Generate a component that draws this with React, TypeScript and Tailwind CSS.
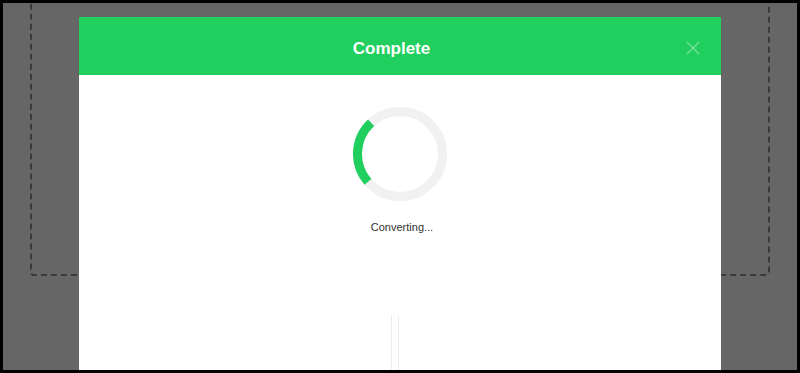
import React from 'react';

function Spinner() {
  const r = 42.5;
  const c = 2 * Math.PI * r;
  const arc = c * (88 / 360);
  return (
    <svg width="94" height="94" viewBox="0 0 94 94">
      <circle cx="47" cy="47" r={r} fill="none" stroke="#f1f1f1" strokeWidth="9" />
      <circle
        cx="47"
        cy="47"
        r={r}
        fill="none"
        stroke="#20cf5e"
        strokeWidth="9"
        strokeDasharray={`${arc} ${c}`}
        transform="rotate(139 47 47)"
      />
    </svg>
  );
}

export default function App() {
  return (
    <div className="h-[373px] w-[800px] bg-black p-[3px] font-['Liberation_Sans',Arial,sans-serif]">
      <div className="relative h-full w-full overflow-hidden bg-[#666666]">
        {/* drop zone behind the dialog */}
        <div className="mx-[27px] -mt-[13px] h-[286px] rounded-[4px] border-2 border-dashed border-[#3a3a3a]" />

        {/* dialog */}
        <div className="absolute left-[76px] top-[14px] flex h-[420px] w-[642px] flex-col bg-white">
          <div className="relative flex h-[58px] shrink-0 items-center justify-center bg-[#20cf5e] pr-[17px] pt-[5px]">
            <h2 className="text-[17px] font-bold text-white">Complete</h2>
            <button className="absolute right-[21px] top-[24px] text-white/40" aria-label="Close">
              <svg width="14" height="14" viewBox="0 0 14 14" fill="none" stroke="currentColor" strokeWidth="1.2">
                <path d="M1 1L13 13M13 1L1 13" />
              </svg>
            </button>
          </div>
          <div className="flex flex-col items-center pt-[32px]">
            <Spinner />
            <p className="mt-[18px] pl-[4px] text-[11px] text-[#333333]">Converting...</p>
            <div className="mt-[79px] flex h-[80px] gap-[6px] pr-[10px]">
              <div className="w-px bg-[#eeeeee]" />
              <div className="w-px bg-[#eeeeee]" />
            </div>
          </div>
        </div>
      </div>
    </div>
  );
}
